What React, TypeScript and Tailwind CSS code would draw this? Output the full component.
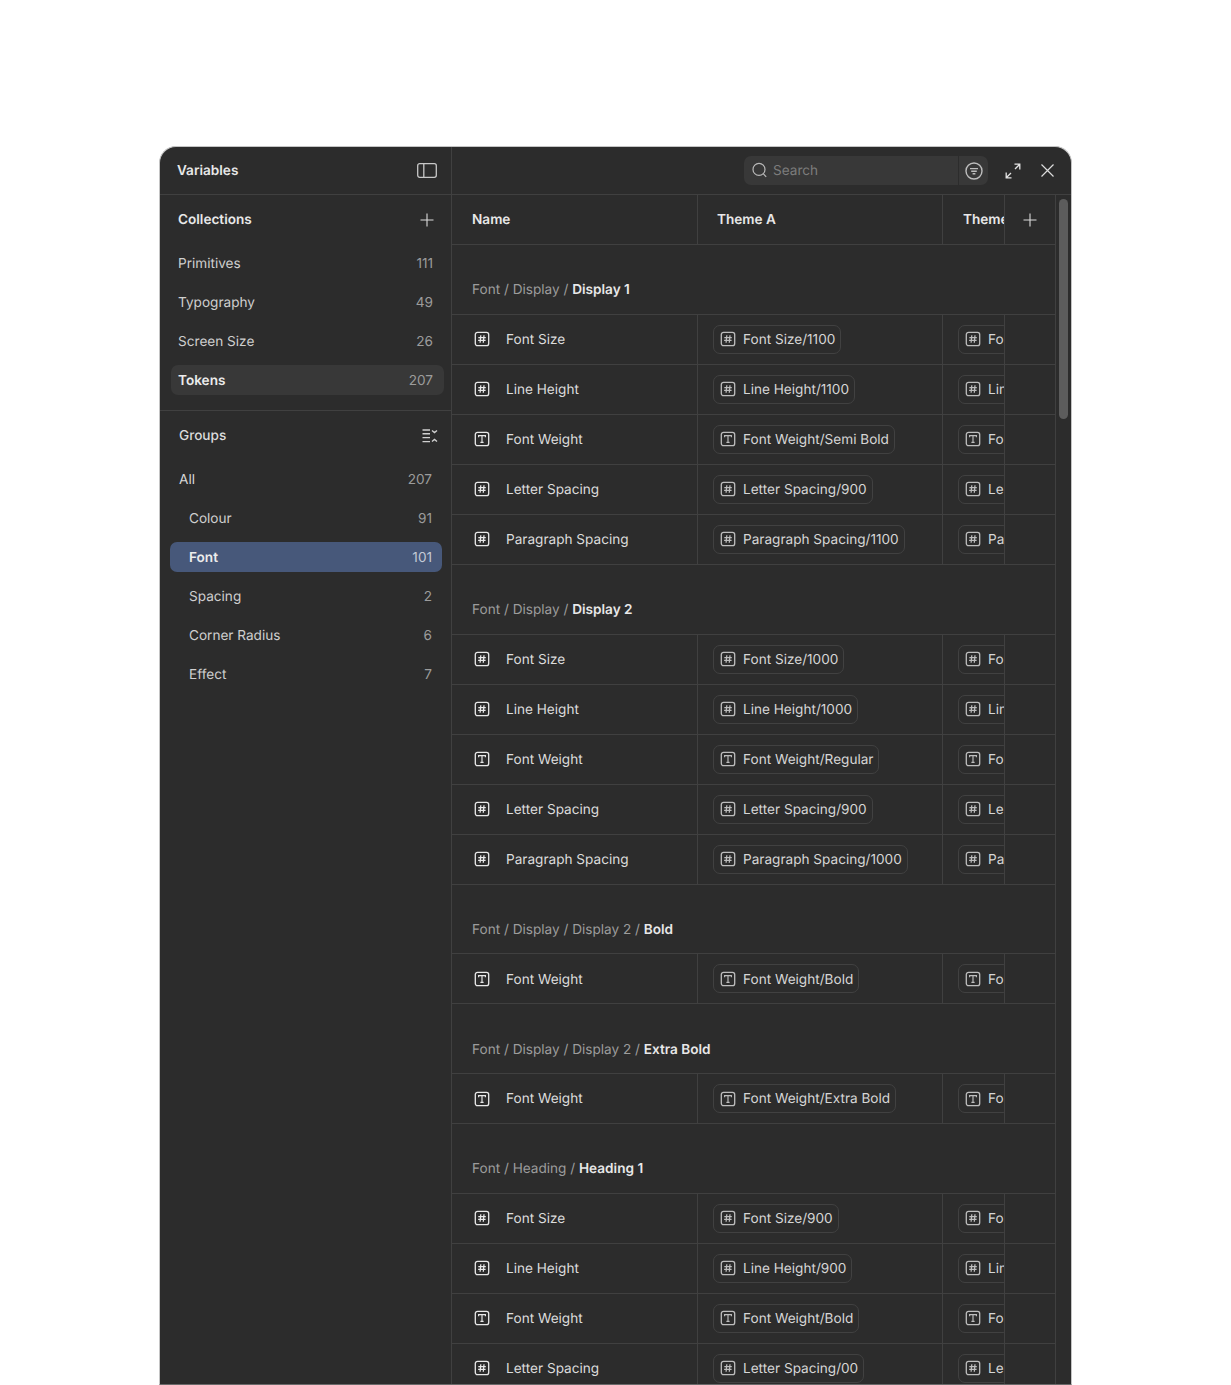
const font = "font-['Inter',sans-serif] [text-rendering:geometricPrecision]";

type VarType = "num" | "text";

interface VarRow {
  type: VarType;
  name: string;
  value: string;
  short: string;
}

interface VarGroup {
  path: string;
  bold: string;
  rows: VarRow[];
}

const numRow = (name: string, value: string, short: string): VarRow => ({ type: "num", name, value, short });
const textRow = (name: string, value: string): VarRow => ({ type: "text", name, value, short: "Fo" });

const groups: VarGroup[] = [
  {
    path: "Font / Display / ",
    bold: "Display 1",
    rows: [
      numRow("Font Size", "Font Size/1100", "Fo"),
      numRow("Line Height", "Line Height/1100", "Lin"),
      textRow("Font Weight", "Font Weight/Semi Bold"),
      numRow("Letter Spacing", "Letter Spacing/900", "Le"),
      numRow("Paragraph Spacing", "Paragraph Spacing/1100", "Pa"),
    ],
  },
  {
    path: "Font / Display / ",
    bold: "Display 2",
    rows: [
      numRow("Font Size", "Font Size/1000", "Fo"),
      numRow("Line Height", "Line Height/1000", "Lin"),
      textRow("Font Weight", "Font Weight/Regular"),
      numRow("Letter Spacing", "Letter Spacing/900", "Le"),
      numRow("Paragraph Spacing", "Paragraph Spacing/1000", "Pa"),
    ],
  },
  {
    path: "Font / Display / Display 2 / ",
    bold: "Bold",
    rows: [textRow("Font Weight", "Font Weight/Bold")],
  },
  {
    path: "Font / Display / Display 2 / ",
    bold: "Extra Bold",
    rows: [textRow("Font Weight", "Font Weight/Extra Bold")],
  },
  {
    path: "Font / Heading / ",
    bold: "Heading 1",
    rows: [
      numRow("Font Size", "Font Size/900", "Fo"),
      numRow("Line Height", "Line Height/900", "Lin"),
      textRow("Font Weight", "Font Weight/Bold"),
      numRow("Letter Spacing", "Letter Spacing/00", "Le"),
    ],
  },
];

const collections = [
  { name: "Primitives", count: 111 },
  { name: "Typography", count: 49 },
  { name: "Screen Size", count: 26 },
  { name: "Tokens", count: 207, active: true },
];

const groupItems = [
  { name: "Colour", count: 91 },
  { name: "Font", count: 101, active: true },
  { name: "Spacing", count: 2 },
  { name: "Corner Radius", count: 6 },
  { name: "Effect", count: 7 },
];

// text sits a pixel lower than flex centering gives
const Label = ({ className = "", children }: { className?: string; children: React.ReactNode }) => (
  <span className={`pt-[2px] ${className}`}>{children}</span>
);

const TypeIcon = ({ type, size }: { type: VarType; size: number }) => (
  <svg width={size} height={size} viewBox="0 0 16 16" fill="none" stroke="currentColor" className="shrink-0">
    <rect x="1.3" y="1.3" width="13.4" height="13.4" rx="2.2" strokeWidth="1.3" />
    {type === "num" ? (
      <path d="M6.8 4.2 6.1 11.8M10 4.2l-.7 7.6M4.3 6.6h7.5M4.1 9.4h7.5" strokeWidth="1.25" />
    ) : (
      <path d="M4.6 6.2V4.6h6.8v1.6M8 4.6v6.8M6.4 11.4h3.2" strokeWidth="1.15" />
    )}
  </svg>
);

const PlusIcon = () => (
  <svg width="14" height="14" viewBox="0 0 14 14" fill="none" stroke="currentColor" strokeWidth="1.1">
    <path d="M7 .5v13M.5 7h13" />
  </svg>
);

const ValuePill = ({ type, label }: { type: VarType; label: string }) => (
  <div className="flex h-[29px] items-center gap-[7px] rounded-[7px] border border-[#414141] pl-[6px] pr-[5px] whitespace-nowrap text-[#d6d6d6]">
    <span className="text-[#bdbdbd]">
      <TypeIcon type={type} size={16} />
    </span>
    <Label>{label}</Label>
  </div>
);

const TableRow = ({ row }: { row: VarRow }) => (
  <div className="flex h-[50px] border-b border-[#404040] text-[13.6px]">
    <div className="flex w-[245px] shrink-0 items-center gap-4 pl-[22px] text-[#dcdcdc]">
      <span className="text-[#e8e8e8]">
        <TypeIcon type={row.type} size={16} />
      </span>
      <Label>{row.name}</Label>
    </div>
    <div className="flex w-[245px] shrink-0 items-center border-l border-[#404040] pl-[15px]">
      <ValuePill type={row.type} label={row.value} />
    </div>
    <div className="flex w-[62px] shrink-0 items-center overflow-hidden border-l border-[#404040] pl-[15px]">
      <ValuePill type={row.type} label={row.short} />
    </div>
    <div className="flex-1 border-l border-[#404040]" />
  </div>
);

const Sidebar = () => (
  <aside className="flex w-[292px] shrink-0 flex-col border-r border-[#404040] text-[13.6px]">
    <div className="flex h-[48px] shrink-0 items-center justify-between border-b border-[#404040] pl-[17px] pr-[14px]">
      <Label className="font-semibold text-[#e8e8e8]">Variables</Label>
      <svg width="20" height="15" viewBox="0 0 20 15" fill="none" stroke="#c8c8c8" strokeWidth="1.3">
        <rect x=".7" y=".7" width="18.6" height="13.6" rx="2" />
        <path d="M6.8.7v13.6" />
      </svg>
    </div>

    <div className="border-b border-[#404040] pb-[15px] pl-[11px] pr-[7px]">
      <div className="flex h-[49px] items-center justify-between pl-[7px] pr-[10px]">
        <Label className="font-semibold text-[#e8e8e8]">Collections</Label>
        <span className="text-[#dcdcdc]">
          <PlusIcon />
        </span>
      </div>
      <div className="mt-1 flex flex-col gap-[9px]">
        {collections.map((c) => (
          <div
            key={c.name}
            className={`flex h-[30px] items-center justify-between rounded-[7px] pl-[7px] pr-[11px] ${c.active ? "bg-[#383838] font-semibold text-[#ececec]" : "text-[#cfcfcf]"}`}
          >
            <Label>{c.name}</Label>
            <Label className="font-normal text-[#9c9c9c]">{c.count}</Label>
          </div>
        ))}
      </div>
    </div>

    <div className="pl-[10px] pr-[9px]">
      <div className="flex h-[49px] items-center justify-between pl-[9px] pr-[4px]">
        <Label className="font-medium text-[#dcdcdc]">Groups</Label>
        <svg width="16" height="14" viewBox="0 0 16 14" fill="none" stroke="#d0d0d0" strokeWidth="1.4">
          <path d="M.5 1h7.5M.5 4.8h7.5M.5 8.6h7.5M.5 12.6h7.5M10 1.5l2.5 2 2.5-2M10 12.5l2.5-2 2.5 2" />
        </svg>
      </div>
      <div className="mt-1 flex flex-col gap-[9px]">
        <div className="flex h-[30px] items-center justify-between pl-[9px] pr-[10px] text-[#d6d6d6]">
          <Label>All</Label>
          <Label className="text-[#9c9c9c]">207</Label>
        </div>
        {groupItems.map((g) => (
          <div
            key={g.name}
            className={`flex h-[30px] items-center justify-between rounded-[7px] pl-[19px] pr-[10px] ${g.active ? "bg-[#47587a] font-semibold text-[#ececec]" : "text-[#cfcfcf]"}`}
          >
            <Label>{g.name}</Label>
            <Label className={`font-normal ${g.active ? "text-[#c3c9d6]" : "text-[#9c9c9c]"}`}>{g.count}</Label>
          </div>
        ))}
      </div>
    </div>
  </aside>
);

const TopBar = () => (
  <div className="flex h-[48px] shrink-0 items-center justify-end border-b border-[#404040] pr-[17px]">
    <div className="flex h-[29px] w-[244px] items-center rounded-[7px] bg-[#383838] text-[13.6px] text-[#7c7c7c]">
      <div className="flex flex-1 items-center gap-[6px] pl-[8px]">
        <svg width="15" height="16" viewBox="0 0 15 16" fill="none" stroke="#b8b8b8" strokeWidth="1.2">
          <circle cx="7" cy="7.4" r="6" />
          <path d="m11.4 11.8 2.8 3" />
        </svg>
        <Label>Search</Label>
      </div>
      <div className="flex h-full w-[30px] items-center justify-center border-l border-[#2c2c2c]">
        <svg width="18" height="18" viewBox="0 0 18 18" fill="none" stroke="#bdbdbd" strokeWidth="1.4">
          <circle cx="9" cy="9" r="8" />
          <path d="M5 6.6h8M6.2 9.2h5.6M7.6 11.8h2.8" />
        </svg>
      </div>
    </div>
    <svg className="ml-[17px]" width="16" height="16" viewBox="0 0 16 16" fill="none" stroke="#e4e4e4" strokeWidth="1.3">
      <path d="M9.5 1.2h5.3v5.3M14.8 1.2 10 6M1.2 9.5v5.3h5.3M1.2 14.8 6 10" />
    </svg>
    <svg className="ml-[20px]" width="13" height="13" viewBox="0 0 13 13" fill="none" stroke="#dcdcdc" strokeWidth="1.2">
      <path d="m.5.5 12 12M12.5.5l-12 12" />
    </svg>
  </div>
);

const TableHeader = () => (
  <div className="flex h-[50px] border-b border-[#404040] text-[13.6px] font-semibold text-[#e8e8e8]">
    <div className="flex w-[245px] shrink-0 items-center pl-5">
      <Label>Name</Label>
    </div>
    <div className="flex w-[245px] shrink-0 items-center border-l border-[#404040] pl-[19px]">
      <Label>Theme A</Label>
    </div>
    <div className="flex w-[62px] shrink-0 items-center overflow-hidden whitespace-nowrap border-l border-[#404040] pl-5">
      <Label>Theme</Label>
    </div>
    <div className="flex flex-1 items-center justify-center border-l border-[#404040] text-[#dcdcdc]">
      <PlusIcon />
    </div>
  </div>
);

export default function App() {
  return (
    <div className={`h-screen overflow-hidden bg-white pl-[159px] pr-[159px] pt-[146px] ${font}`}>
      <div className="flex h-full overflow-hidden rounded-t-[17px] border border-[#c4c4c4] border-b-[#6a6a6a] bg-[#2c2c2c]">
        <Sidebar />
        <main className="flex min-w-0 flex-1 flex-col">
          <TopBar />
          <div className="relative flex min-h-0 flex-1 overflow-hidden">
            <div className="min-w-0 flex-1 border-r border-[#404040]">
              <TableHeader />
              {groups.map((g) => (
                <div key={g.path + g.bold}>
                  <div className="flex h-[69.8px] items-end border-b border-[#404040] pb-[13.3px] pl-5 text-[13.6px] text-[#9c9c9c]">
                    <span>
                      {g.path}
                      <span className="font-semibold text-[#e8e8e8]">{g.bold}</span>
                    </span>
                  </div>
                  {g.rows.map((r) => (
                    <TableRow key={r.name} row={r} />
                  ))}
                </div>
              ))}
            </div>
            <div className="w-[15px] shrink-0 px-[3px] pt-1">
              <div className="h-[220px] rounded-full bg-[#5c5c5c]" />
            </div>
          </div>
        </main>
      </div>
    </div>
  );
}
